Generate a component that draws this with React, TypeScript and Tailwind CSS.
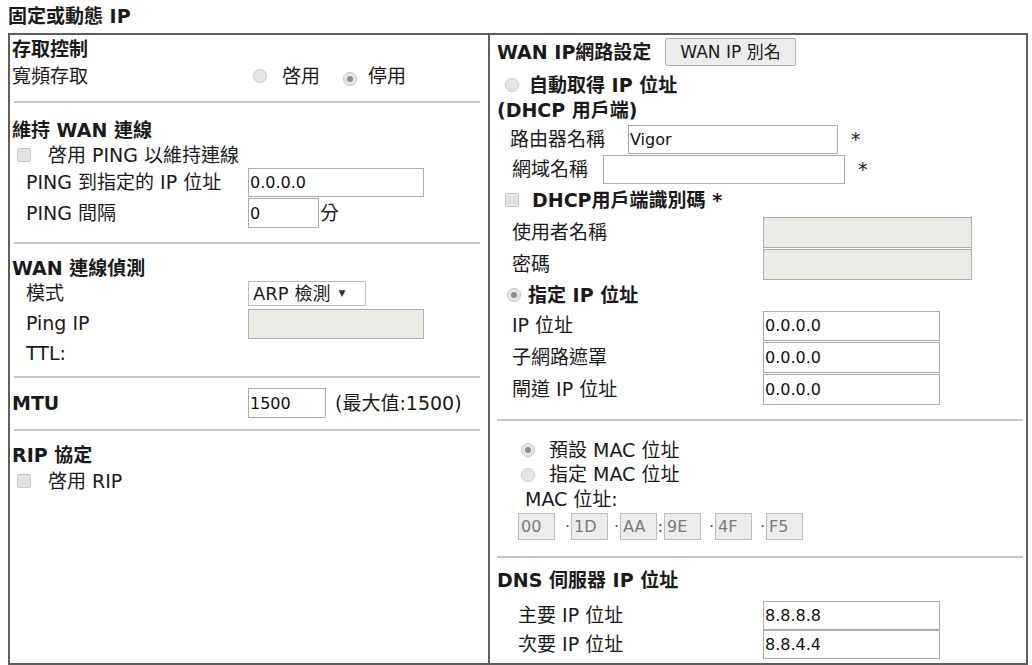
import React from "react";

const FONT = { fontFamily: '"DejaVu Sans", "Noto Sans CJK TC", sans-serif' };

function Radio({ checked }: { checked?: boolean }) {
  return (
    <span className="inline-flex w-[14px] h-[14px] shrink-0 rounded-full border border-[#c6c6c6] bg-[#e6e6e6] items-center justify-center">
      {checked && <span className="w-[6px] h-[6px] rounded-full bg-[#8c8c8c]" />}
    </span>
  );
}

function Check() {
  return <span className="inline-block w-[14px] h-[14px] shrink-0 rounded-[2px] border border-[#c6c6c6] bg-[#e2e2e2]" />;
}

function TextBox({ value = "", w, h, disabled }: { value?: string; w: string; h: string; disabled?: boolean }) {
  return (
    <input
      readOnly
      defaultValue={value}
      className={`${w} ${h} shrink-0 border border-[#acacac] px-[1px] text-[16px] text-[#111] outline-none ${disabled ? "bg-[#ebebe6]" : "bg-white"}`}
    />
  );
}

function Hr({ cls }: { cls: string }) {
  return <div className={`h-[2px] bg-[#c4c4c4] ${cls}`} />;
}

function MacBox({ v }: { v: string }) {
  return (
    <span className="inline-flex w-[37px] h-[27px] items-center border border-[#bdbdbd] bg-[#ececec] pl-[2px] text-[16px] text-[#7a7a7a]">
      {v}
    </span>
  );
}

export default function App() {
  return (
    <div className="w-[1032px] h-[665px] bg-white text-[#1a1a1a] text-[19px] leading-none overflow-hidden" style={FONT}>
      <div className="h-[33px] flex items-center pl-[8px] font-bold">固定或動態 IP</div>
      <div className="ml-[8px] w-[1020px] h-[632px] border-2 border-[#5e5e5e] flex">
        {/* Left column */}
        <div className="w-[480px] border-r-2 border-[#5e5e5e] flex flex-col">
          <div className="mt-[1px] h-[26px] flex items-center pl-[2px] font-bold">存取控制</div>
          <div className="h-[28px] flex items-center">
            <span className="w-[238px] pl-[2px]">寬頻存取</span>
            <span className="ml-[5px] flex items-center">
              <Radio />
              <span className="ml-[15px]">啓用</span>
              <span className="ml-[23px]"><Radio checked /></span>
              <span className="ml-[11px]">停用</span>
            </span>
          </div>
          <Hr cls="mt-[11px] ml-[4px] mr-[8px]" />

          <div className="mt-[14px] h-[26px] flex items-center pl-[2px] font-bold">維持 WAN 連線</div>
          <div className="h-[24px] flex items-center pl-[7px]">
            <Check />
            <span className="ml-[17px]">啓用 PING 以維持連線</span>
          </div>
          <div className="h-[30px] flex items-center">
            <span className="w-[238px] pl-[16px]">PING 到指定的 IP 位址</span>
            <TextBox value="0.0.0.0" w="w-[176px]" h="h-[29px]" />
          </div>
          <div className="h-[32px] flex items-center">
            <span className="w-[238px] pl-[16px]">PING 間隔</span>
            <TextBox value="0" w="w-[71px]" h="h-[30px]" />
            <span className="ml-[1px]">分</span>
          </div>
          <Hr cls="mt-[13px] ml-[4px] mr-[8px]" />

          <div className="mt-[12px] h-[25px] flex items-center pl-[2px] font-bold">WAN 連線偵測</div>
          <div className="h-[25px] flex items-center">
            <span className="w-[238px] pl-[16px]">模式</span>
            <span className="w-[118px] h-[25px] border border-[#bdbdbd] bg-white flex items-center pl-[4px] text-[18px]">
              ARP 檢測
              <span className="ml-[8px] text-[9px] text-[#333]">▼</span>
            </span>
          </div>
          <div className="h-[35px] flex items-center">
            <span className="w-[238px] pl-[16px]">Ping IP</span>
            <TextBox w="w-[176px]" h="h-[30px]" disabled />
          </div>
          <div className="h-[24px] flex items-center pl-[16px]">TTL:</div>
          <Hr cls="mt-[11px] ml-[4px] mr-[8px]" />

          <div className="mt-[8px] h-[34px] flex items-center">
            <span className="w-[238px] pl-[2px] font-bold">MTU</span>
            <TextBox value="1500" w="w-[78px]" h="h-[30px]" />
            <span className="ml-[9px]">(最大值:1500)</span>
          </div>
          <Hr cls="mt-[9px] ml-[4px] mr-[8px]" />

          <div className="mt-[11px] h-[26px] flex items-center pl-[2px] font-bold">RIP 協定</div>
          <div className="h-[26px] flex items-center pl-[7px]">
            <Check />
            <span className="ml-[17px]">啓用 RIP</span>
          </div>
        </div>

        {/* Right column */}
        <div className="flex-1 flex flex-col">
          <div className="mt-[1px] h-[32px] flex items-center pl-[7px]">
            <span className="font-bold w-[168px]">WAN IP網路設定</span>
            <span className="w-[131px] h-[28px] flex items-center justify-center border border-[#adadad] rounded-[2px] bg-[#ececec] text-[17px]">
              WAN IP 別名
            </span>
          </div>
          <div className="mt-[4px] h-[26px] flex items-center pl-[15px]">
            <Radio />
            <span className="ml-[10px] font-bold">自動取得 IP 位址</span>
          </div>
          <div className="h-[24px] flex items-center pl-[7px] font-bold">(DHCP 用戶端)</div>
          <div className="mt-[2px] h-[30px] flex items-center pl-[20px]">
            <span className="w-[118px]">路由器名稱</span>
            <TextBox value="Vigor" w="w-[210px]" h="h-[29px]" />
            <span className="ml-[13px]">*</span>
          </div>
          <div className="h-[30px] flex items-center pl-[22px]">
            <span className="w-[91px]">網域名稱</span>
            <TextBox w="w-[242px]" h="h-[29px]" />
            <span className="ml-[13px]">*</span>
          </div>
          <div className="h-[32px] flex items-center pl-[15px]">
            <Check />
            <span className="ml-[13px] font-bold">DHCP用戶端識別碼 *</span>
          </div>
          <div className="h-[32px] flex items-center">
            <span className="w-[273px] pl-[22px]">使用者名稱</span>
            <TextBox w="w-[209px]" h="h-[31px]" disabled />
          </div>
          <div className="h-[32px] flex items-center">
            <span className="w-[273px] pl-[22px]">密碼</span>
            <TextBox w="w-[209px]" h="h-[31px]" disabled />
          </div>
          <div className="h-[30px] flex items-center pl-[17px]">
            <Radio checked />
            <span className="ml-[7px] font-bold">指定 IP 位址</span>
          </div>
          <div className="h-[31px] flex items-center">
            <span className="w-[273px] pl-[22px]">IP 位址</span>
            <TextBox value="0.0.0.0" w="w-[177px]" h="h-[30px]" />
          </div>
          <div className="h-[32px] flex items-center">
            <span className="w-[273px] pl-[22px]">子網路遮罩</span>
            <TextBox value="0.0.0.0" w="w-[177px]" h="h-[31px]" />
          </div>
          <div className="h-[32px] flex items-center">
            <span className="w-[273px] pl-[22px]">閘道 IP 位址</span>
            <TextBox value="0.0.0.0" w="w-[177px]" h="h-[31px]" />
          </div>
          <Hr cls="mt-[14px] ml-[7px] mr-[3px]" />

          <div className="mt-[17px] h-[24px] flex items-center pl-[31px]">
            <Radio checked />
            <span className="ml-[14px]">預設 MAC 位址</span>
          </div>
          <div className="h-[25px] flex items-center pl-[31px]">
            <Radio />
            <span className="ml-[14px]">指定 MAC 位址</span>
          </div>
          <div className="h-[25px] flex items-center pl-[35px]">MAC 位址:</div>
          <div className="mt-[1px] h-[27px] flex items-center pl-[28px] text-[16px] text-[#555]">
            <MacBox v="00" />
            <span className="w-[16px] text-right pr-[1px]">·</span>
            <MacBox v="1D" />
            <span className="w-[12px] text-right pr-[1px]">·</span>
            <MacBox v="AA" />
            <span className="w-[7px] text-center">:</span>
            <MacBox v="9E" />
            <span className="w-[14px] text-right pr-[1px]">·</span>
            <MacBox v="4F" />
            <span className="w-[14px] text-right pr-[1px]">·</span>
            <MacBox v="F5" />
          </div>
          <Hr cls="mt-[16px] ml-[7px] mr-[3px]" />

          <div className="mt-[9px] h-[26px] flex items-center pl-[7px] font-bold">DNS 伺服器 IP 位址</div>
          <div className="mt-[8px] h-[29px] flex items-center">
            <span className="w-[273px] pl-[28px]">主要 IP 位址</span>
            <TextBox value="8.8.8.8" w="w-[177px]" h="h-[29px]" />
          </div>
          <div className="h-[29px] flex items-center">
            <span className="w-[273px] pl-[28px]">次要 IP 位址</span>
            <TextBox value="8.8.4.4" w="w-[177px]" h="h-[29px]" />
          </div>
        </div>
      </div>
    </div>
  );
}
